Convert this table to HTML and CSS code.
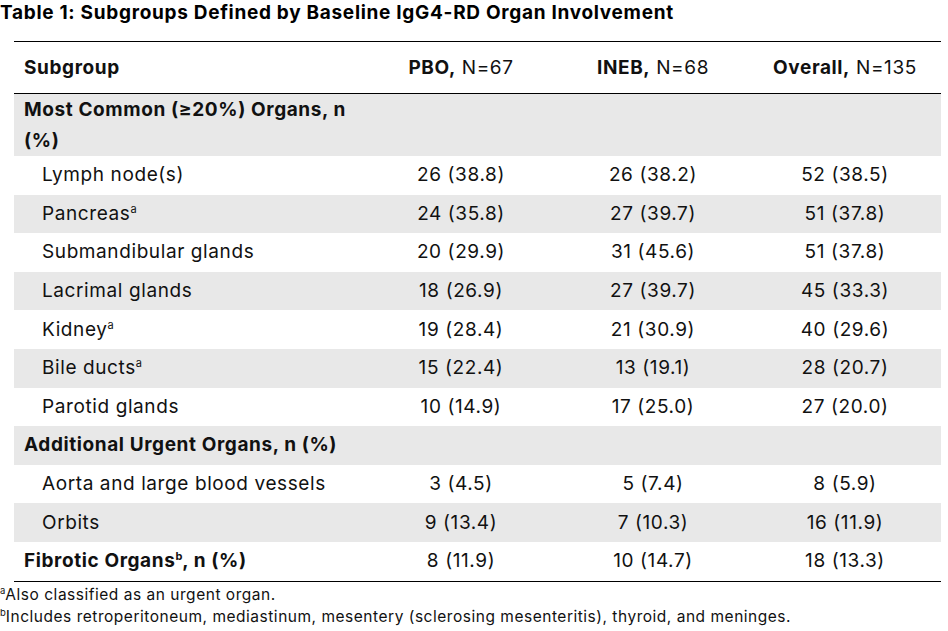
FILE: index.html
```html
<!DOCTYPE html>
<html>
<head>
<meta charset="utf-8">
<link rel="stylesheet" href="styles.css">
</head>
<body>
<h1 class="title">Table 1: Subgroups Defined by Baseline IgG4-RD Organ Involvement</h1>
<table class="tbl">
  <colgroup><col class="c0"><col class="cn"><col class="cn"><col class="cn"></colgroup>
  <thead>
    <tr class="head"><th class="lab">Subgroup</th><th><b>PBO,</b> N=67</th><th><b>INEB,</b> N=68</th><th><b>Overall,</b> N=135</th></tr>
  </thead>
  <tbody>
    <tr class="g sec2"><td class="lab sec">Most Common (≥20%) Organs, n<br>(%)</td><td></td><td></td><td></td></tr>
    <tr><td class="sub">Lymph node(s)</td><td>26 (38.8)</td><td>26 (38.2)</td><td>52 (38.5)</td></tr>
    <tr class="g"><td class="sub">Pancreas<sup>a</sup></td><td>24 (35.8)</td><td>27 (39.7)</td><td>51 (37.8)</td></tr>
    <tr><td class="sub">Submandibular glands</td><td>20 (29.9)</td><td>31 (45.6)</td><td>51 (37.8)</td></tr>
    <tr class="g"><td class="sub">Lacrimal glands</td><td>18 (26.9)</td><td>27 (39.7)</td><td>45 (33.3)</td></tr>
    <tr><td class="sub">Kidney<sup>a</sup></td><td>19 (28.4)</td><td>21 (30.9)</td><td>40 (29.6)</td></tr>
    <tr class="g"><td class="sub">Bile ducts<sup>a</sup></td><td>15 (22.4)</td><td>13 (19.1)</td><td>28 (20.7)</td></tr>
    <tr><td class="sub">Parotid glands</td><td>10 (14.9)</td><td>17 (25.0)</td><td>27 (20.0)</td></tr>
    <tr class="g"><td class="lab sec">Additional Urgent Organs, n (%)</td><td></td><td></td><td></td></tr>
    <tr><td class="sub">Aorta and large blood vessels</td><td>3 (4.5)</td><td>5 (7.4)</td><td>8 (5.9)</td></tr>
    <tr class="g"><td class="sub">Orbits</td><td>9 (13.4)</td><td>7 (10.3)</td><td>16 (11.9)</td></tr>
    <tr class="last"><td class="lab sec">Fibrotic Organs<sup>b</sup>, n (%)</td><td>8 (11.9)</td><td>10 (14.7)</td><td>18 (13.3)</td></tr>
  </tbody>
</table>
<p class="note"><sup>a</sup>Also classified as an urgent organ.</p>
<p class="note"><sup>b</sup>Includes retroperitoneum, mediastinum, mesentery (sclerosing mesenteritis), thyroid, and meninges.</p>
</body>
</html>
```
FILE: styles.css
```css
html, body {
  margin: 0;
  padding: 0;
  background: #fff;
}
body {
  font-family: "Inter", "Liberation Sans", sans-serif;
  color: #111;
  width: 948px;
  height: 631px;
  overflow: hidden;
}
.title {
  margin: 0;
  padding: 2px 0 0 0;
  font-size: 19px;
  line-height: 22px;
  font-weight: 700;
  letter-spacing: 0.7px;
  color: #000;
}
.tbl {
  margin: 17px 0 0 14px;
  width: 927px;
  border-collapse: collapse;
  table-layout: fixed;
  font-size: 19px;
  letter-spacing: 0.6px;
}
.c0 { width: 351px; }
.cn { width: 192px; }
.tbl th, .tbl td {
  padding: 0;
  text-align: center;
  vertical-align: middle;
  height: 38.6px;
  line-height: 22px;
}
.tbl th {
  font-weight: 400;
}
.head th {
  height: 51px;
  border-top: 1px solid #000;
  border-bottom: 1px solid #000;
}
.tbl .lab {
  text-align: left;
  padding-left: 10px;
  font-weight: 700;
}
.tbl .sub {
  text-align: left;
  padding-left: 28px;
}
.sec2 td {
  height: 60px;
}
.sec2 .sec {
  line-height: 31px;
}
tr.g td {
  background: #e8e8e8;
}
tr.last td {
  border-bottom: 1px solid #000;
}
sup {
  font-size: 11px;
  line-height: 0;
  vertical-align: 7px;
  letter-spacing: 0;
}
.note {
  margin: 0;
  font-size: 15.5px;
  line-height: 22px;
  letter-spacing: 0.52px;
}
.tbl + .note {
  margin-top: 2px;
}
.note sup {
  font-size: 9.5px;
  vertical-align: 6px;
}
```
